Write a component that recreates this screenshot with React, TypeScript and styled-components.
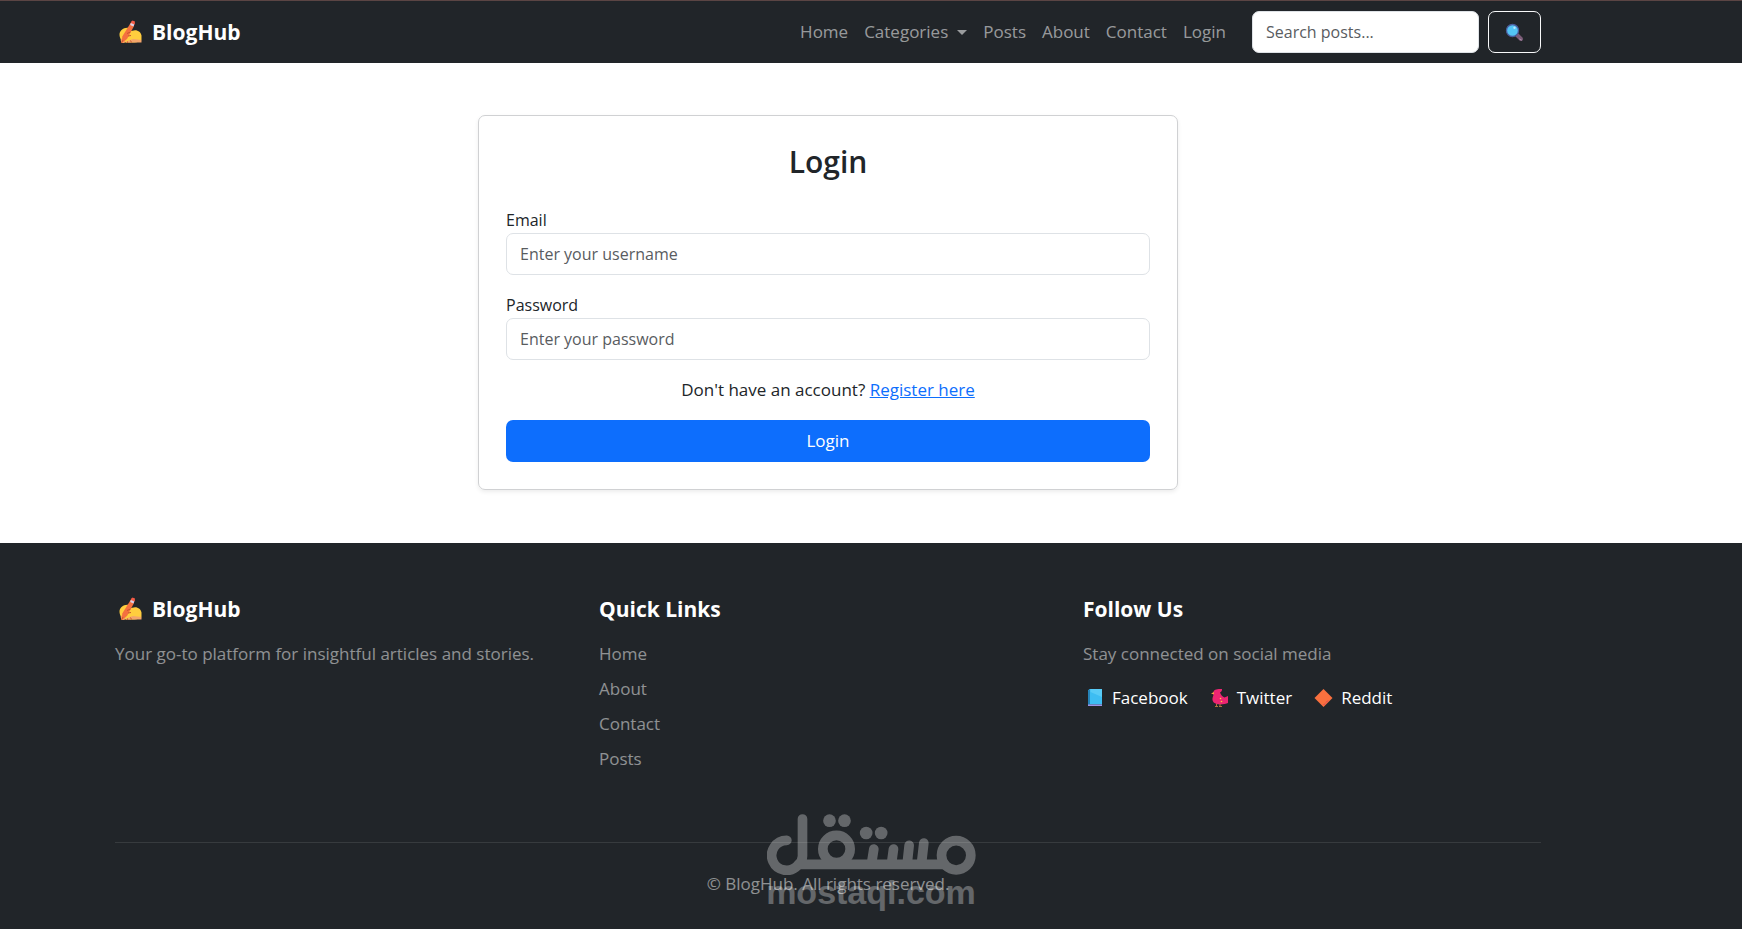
import React from "react";
import styled, { createGlobalStyle } from "styled-components";

const GlobalStyle = createGlobalStyle`
  *, *::before, *::after { box-sizing: border-box; }
  body {
    margin: 0;
    background: #fff;
    color: #212529;
    font-family: "Open Sans", "Noto Sans", sans-serif;
    font-size: 17px;
    line-height: 26px;
  }
  input, button { font: inherit; }
`;

const Page = styled.div`
  display: flex;
  flex-direction: column;
  min-height: 100vh;
`;

const Container = styled.div`
  width: 100%;
  max-width: 1426px;
  margin: 0 auto;
`;

const NavBar = styled.header`
  padding: 10px 86px 10px 0;
  border-top: 1px solid #5b4544;
  background: #212529;
`;

const NavRow = styled(Container)`
  display: flex;
  align-items: center;
  justify-content: space-between;
`;

const Brand = styled.a`
  display: flex;
  align-items: center;
  gap: 8px;
  padding-left: 2px;
  color: #fff;
  font-size: 21px;
  font-weight: 700;
  text-decoration: none;
`;

const NavEnd = styled.div`
  display: flex;
  align-items: center;
  gap: 26px;
`;

const NavLinks = styled.nav`
  display: flex;
  align-items: center;
  gap: 16px;
`;

const NavLink = styled.a`
  color: rgba(255, 255, 255, 0.55);
  text-decoration: none;
`;

const NavMenuButton = styled.button`
  display: flex;
  align-items: center;
  gap: 9px;
  padding: 0;
  border: 0;
  background: none;
  color: rgba(255, 255, 255, 0.55);

  &::after {
    content: "";
    border-top: 5px solid;
    border-left: 5px solid transparent;
    border-right: 5px solid transparent;
  }
`;

const SearchForm = styled.form`
  display: flex;
  gap: 9px;
`;

const TextInput = styled.input`
  width: 100%;
  height: 42px;
  padding: 0 13px;
  border: 1px solid #dee2e6;
  border-radius: 7px;
  background: #fff;
  color: #212529;
  font-size: 16px;

  &::placeholder { color: #595c5f; opacity: 1; }
`;

const SearchInput = styled(TextInput)`
  width: 227px;
`;

const SearchButton = styled.button`
  display: flex;
  align-items: center;
  justify-content: center;
  width: 53px;
  height: 42px;
  padding: 0;
  border: 1px solid #f8f9fa;
  border-radius: 7px;
  background: transparent;
`;

const Main = styled.main`
  padding: 52px 86px 53px 0;
`;

const Card = styled.section`
  width: calc(50% - 13px);
  min-width: 320px;
  margin: 0 auto;
  padding: 27px;
  border: 1px solid #d0d1d3;
  border-radius: 7px;
  box-shadow: 0 2px 4px rgba(0, 0, 0, 0.075);
`;

const CardTitle = styled.h1`
  margin: 0 0 26px;
  font-size: 30px;
  font-weight: 600;
  line-height: 38px;
  text-align: center;
`;

const LoginForm = styled.form`
  display: flex;
  flex-direction: column;
  gap: 17px;
`;

const Field = styled.div`
  display: flex;
  flex-direction: column;
`;

const Label = styled.label`
  font-size: 16px;
`;

const Prompt = styled.p`
  margin: 0;
  text-align: center;

  a { color: #0d6efd; }
`;

const SubmitButton = styled.button`
  height: 42px;
  border: 0;
  border-radius: 7px;
  background: #0d6efd;
  color: #fff;
`;

const Footer = styled.footer`
  position: relative;
  flex: 1;
  padding: 53px 86px 26px 0;
  background: #212529;
  color: rgba(255, 255, 255, 0.5);
`;

const FooterGrid = styled(Container)`
  display: grid;
  grid-template-columns: repeat(3, 1fr);
  gap: 26px;
  padding-bottom: 70px;
`;

const FooterTitle = styled.h2`
  display: flex;
  align-items: center;
  gap: 8px;
  margin: 0 0 18px;
  color: #fff;
  font-size: 21px;
  font-weight: 700;
  line-height: 27px;
`;

const BrandTitle = styled(FooterTitle)`
  padding-left: 2px;
`;

const FooterText = styled.p`
  margin: 0;
`;

const LinkList = styled.ul`
  display: flex;
  flex-direction: column;
  gap: 9px;
  margin: 0;
  padding: 0;
  list-style: none;

  a { color: inherit; text-decoration: none; }
`;

const SocialLinks = styled.div`
  display: flex;
  flex-wrap: wrap;
  gap: 20px;
  margin-top: 18px;
`;

const SocialLink = styled.a`
  display: flex;
  align-items: center;
  gap: 5px;
  color: #fff;
  text-decoration: none;
`;

const Copyright = styled(Container)`
  padding-top: 28px;
  border-top: 1px solid #373b3e;
  text-align: center;
`;

const Watermark = styled.div`
  position: absolute;
  inset: auto 0 20px;
  display: flex;
  flex-direction: column;
  align-items: center;
  opacity: 0.3;
  color: #fff;
  font-family: "Liberation Sans", sans-serif;
  font-size: 34px;
  font-weight: 700;
  line-height: 34px;
  pointer-events: none;

  svg { display: block; }
`;

const WritingHand = () => (
  <svg width="27" height="27" viewBox="0 0 27 27" aria-hidden="true">
    <path d="M2.5 15.5c0-3 2.800-6 6-6.500l4-.5 1.500 3.500 4-.8c3.500 0 6 2.300 6.500 5.300v4.500c-2 1.200-4 2.500-7 2.500H8.500c-3.500-.5-6-4-6-8z" fill="#ffcd3e" />
    <path d="M9 22.500l7-2.500 8.500 1v2.500H9z" fill="#f4a56b" />
    <path d="M3.500 20.500c2-1.500 4-1 5 .5l-1 3h-3z" fill="#f79a5c" />
    <path d="M14.500 2.500l3 1.500-1 4-6.500 12-5.500 4 .8-6.500z" fill="#f4703f" />
    <path d="M14 3l1.500-1.500 2.500 1-.3 3-3.500-1.500z" fill="#f35b47" />
    <path d="M13.800 4l3.500 1.600-.8 2-3.300-1.600z" fill="#d9cfe8" />
    <path d="M10 14.500l3.500-1.500M11 17l3-.5M4.500 24l1.500-3M10.500 22.500v1.500M13.500 21.500l1 2" stroke="#c9552f" fill="none" />
  </svg>
);

const Magnifier = () => (
  <svg width="19" height="19" viewBox="0 0 19 19" aria-hidden="true">
    <path d="M11.500 11.500l4.500 4.500" stroke="#7b5c78" strokeWidth="4" strokeLinecap="round" />
    <path d="M14.500 16l2 1" stroke="#a68aa3" strokeLinecap="round" />
    <circle cx="7.500" cy="7.500" r="6" fill="#53c5f5" stroke="#4b5d9e" strokeWidth="1.300" />
    <circle cx="9.500" cy="4.800" r="1.200" fill="#b6e8fc" />
  </svg>
);

const Book = () => (
  <svg width="24" height="24" viewBox="0 0 24 24" aria-hidden="true">
    <path d="M6.500 3H19v15.500H6.500L5 19V4.500z" fill="#3dbdf2" />
    <path d="M7.500 3H19v8l-11.500-5z" fill="#58cbf6" />
    <path d="M5 4.500L7 3v15.500l-2 1z" fill="#2583b8" />
    <path d="M5 18.500h14v1.500H5z" fill="#9c94e8" />
  </svg>
);

const Bird = () => (
  <svg width="24" height="24" viewBox="0 0 24 24" aria-hidden="true">
    <path d="M5.500 5.500C6.500 3.500 9 3 14 3c.5 1.500-1 3-2 3.500 1 2.500 2.500 4.500 4.500 5l3.500-1.500v7c-2 1.200-7 1.700-10 1.300-3.500-.5-6-2.500-5.500-6 .2-1.500 1.200-3 1-4.300z" fill="#ed2572" />
    <path d="M3 7.500l3-1.500v2.500z" fill="#f7a445" />
    <path d="M8.500 18v2.500M12 18v2.500M7 20.500h3M11 20.500h3" stroke="#b2743c" fill="none" />
    <circle cx="12.500" cy="12.500" r=".8" fill="#ffcd3e" />
    <circle cx="13.500" cy="15.500" r=".8" fill="#ffcd3e" />
  </svg>
);

const Diamond = () => (
  <svg width="24" height="24" viewBox="0 0 24 24" aria-hidden="true">
    <path d="M11.500 3l9 9-9 9-9-9z" fill="#f9703e" />
    <path d="M14 16.500l2-2M11.500 19l1.500-1.500" stroke="#d8375f" />
  </svg>
);

const WatermarkLogo = () => (
  <svg width="209" height="61" viewBox="258 42 626 183" role="img" aria-label="مستقل">
    <g fill="none" stroke="currentColor" strokeWidth="29" strokeLinecap="round">
      <circle cx="825" cy="166" r="44" />
      <circle cx="466" cy="147" r="41" />
      <path d="M317 121a45 45 0 1 0 33 75Q364 184 364 168V57" />
      <path d="M352 193H790M578 147l-7 44M637 147l-6 44M684 136l-6 55M728 129l-7 62" />
    </g>
    <g fill="currentColor">
      <circle cx="445" cy="62" r="19" />
      <circle cx="490" cy="62" r="19" />
      <circle cx="555" cy="99" r="19" />
      <circle cx="600" cy="99" r="19" />
    </g>
  </svg>
);

const quickLinks = ["Home", "About", "Contact", "Posts"];

const socials = [
  { name: "Facebook", Icon: Book },
  { name: "Twitter", Icon: Bird },
  { name: "Reddit", Icon: Diamond },
];

export default function App() {
  const stay = (event: React.FormEvent) => event.preventDefault();

  return (
    <Page>
      <GlobalStyle />
      <NavBar>
        <NavRow>
          <Brand href="#home"><WritingHand />BlogHub</Brand>
          <NavEnd>
            <NavLinks aria-label="Main">
              <NavLink href="#home">Home</NavLink>
              <NavMenuButton type="button" aria-haspopup="menu">Categories</NavMenuButton>
              <NavLink href="#posts">Posts</NavLink>
              <NavLink href="#about">About</NavLink>
              <NavLink href="#contact">Contact</NavLink>
              <NavLink href="#login">Login</NavLink>
            </NavLinks>
            <SearchForm role="search" onSubmit={stay}>
              <SearchInput type="search" aria-label="Search posts" placeholder="Search posts..." />
              <SearchButton type="submit" aria-label="Search"><Magnifier /></SearchButton>
            </SearchForm>
          </NavEnd>
        </NavRow>
      </NavBar>

      <Main>
        <Container>
          <Card>
            <CardTitle>Login</CardTitle>
            <LoginForm onSubmit={stay}>
              <Field>
                <Label htmlFor="email">Email</Label>
                <TextInput id="email" type="text" placeholder="Enter your username" />
              </Field>
              <Field>
                <Label htmlFor="password">Password</Label>
                <TextInput id="password" type="password" placeholder="Enter your password" />
              </Field>
              <Prompt>Don't have an account? <a href="#register">Register here</a></Prompt>
              <SubmitButton type="submit">Login</SubmitButton>
            </LoginForm>
          </Card>
        </Container>
      </Main>

      <Footer>
        <FooterGrid>
          <div>
            <BrandTitle><WritingHand />BlogHub</BrandTitle>
            <FooterText>Your go-to platform for insightful articles and stories.</FooterText>
          </div>
          <div>
            <FooterTitle>Quick Links</FooterTitle>
            <LinkList>
              {quickLinks.map((name) => (
                <li key={name}><a href={`#${name.toLowerCase()}`}>{name}</a></li>
              ))}
            </LinkList>
          </div>
          <div>
            <FooterTitle>Follow Us</FooterTitle>
            <FooterText>Stay connected on social media</FooterText>
            <SocialLinks>
              {socials.map(({ name, Icon }) => (
                <SocialLink key={name} href={`#${name.toLowerCase()}`}><Icon />{name}</SocialLink>
              ))}
            </SocialLinks>
          </div>
        </FooterGrid>
        <Copyright>© BlogHub. All rights reserved.</Copyright>
        <Watermark>
          <WatermarkLogo />
          <span>mostaql.com</span>
        </Watermark>
      </Footer>
    </Page>
  );
}
